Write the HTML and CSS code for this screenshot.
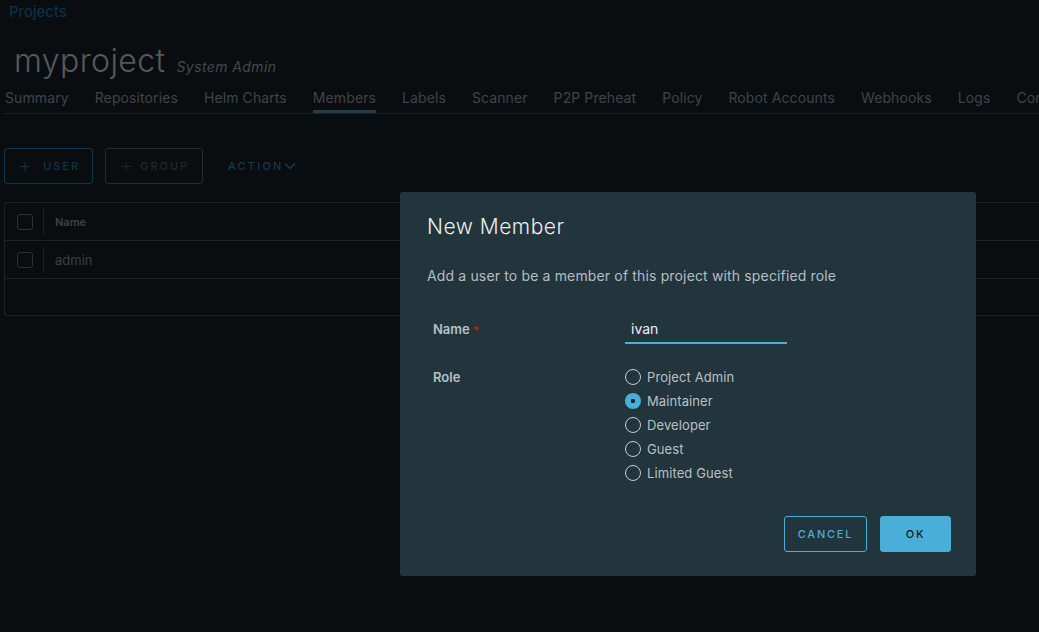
FILE: index.html
```html
<!DOCTYPE html>
<html>
<head>
<meta charset="utf-8">
<link rel="stylesheet" href="styles.css">
</head>
<body>
<div class="page">
  <a class="crumb">Projects</a>
  <div class="title-row">
    <h1 class="title">myproject</h1>
    <span class="role-tag">System Admin</span>
  </div>
  <nav class="tabs">
    <span class="tab">Summary</span>
    <span class="tab">Repositories</span>
    <span class="tab">Helm Charts</span>
    <span class="tab active">Members</span>
    <span class="tab">Labels</span>
    <span class="tab">Scanner</span>
    <span class="tab">P2P Preheat</span>
    <span class="tab">Policy</span>
    <span class="tab">Robot Accounts</span>
    <span class="tab">Webhooks</span>
    <span class="tab">Logs</span>
    <span class="tab">Configuration</span>
  </nav>
  <div class="toolbar">
    <button class="btn btn-user"><span class="plus">+</span>USER</button>
    <button class="btn btn-group"><span class="plus">+</span>GROUP</button>
    <button class="btn-link">ACTION<svg class="caret" width="12" height="8" viewBox="0 0 12 8"><path d="M1 1.5 L6 6.5 L11 1.5" fill="none" stroke="currentColor" stroke-width="1.6"/></svg></button>
  </div>
  <div class="grid">
    <div class="grid-row head">
      <span class="cb"></span><span class="sep"></span><span class="cell bold">Name</span>
    </div>
    <div class="grid-row">
      <span class="cb"></span><span class="sep"></span><span class="cell">admin</span>
    </div>
    <div class="grid-foot"></div>
  </div>
</div>

<div class="modal">
  <h3 class="modal-title">New Member</h3>
  <p class="modal-desc">Add a user to be a member of this project with specified role</p>
  <div class="form">
    <div class="form-row">
      <label class="label">Name <span class="req">*</span></label>
      <div class="input">ivan</div>
    </div>
    <div class="form-row roles">
      <label class="label">Role</label>
      <div class="radios">
        <div class="radio"><span class="dot"></span>Project Admin</div>
        <div class="radio checked"><span class="dot"></span>Maintainer</div>
        <div class="radio"><span class="dot"></span>Developer</div>
        <div class="radio"><span class="dot"></span>Guest</div>
        <div class="radio"><span class="dot"></span>Limited Guest</div>
      </div>
    </div>
  </div>
  <div class="modal-foot">
    <button class="mbtn outline">CANCEL</button>
    <button class="mbtn primary">OK</button>
  </div>
</div>
</body>
</html>
```

FILE: styles.css
```css
html, body {
  margin: 0;
  padding: 0;
  background: #0a0d10;
  font-family: "Inter", "Noto Sans", sans-serif;
  overflow: hidden;
  width: 1039px;
  height: 632px;
}
.page {
  position: relative;
  overflow: hidden;
}
.crumb {
  display: block;
  color: #0b3550;
  font-size: 15px;
  line-height: 18px;
  padding-left: 9px;
  margin-top: 3px;
}
.title-row {
  display: flex;
  align-items: baseline;
  gap: 11px;
  padding-left: 14px;
  margin-top: 20px;
  height: 40px;
}
.title {
  margin: 0;
  font-size: 32px;
  font-weight: 300;
  letter-spacing: 0.4px;
  color: #55595c;
  line-height: 40px;
}
.role-tag {
  font-style: italic;
  font-size: 14px;
  letter-spacing: 0.4px;
  color: #44494c;
}
.tabs {
  display: flex;
  gap: 26px;
  margin-left: 4px;
  padding-left: 1px;
  border-bottom: 1px solid #1b2024;
  height: 30px;
  white-space: nowrap;
  margin-top: 2px;
  overflow: hidden;
}
.tab {
  font-size: 14px;
  letter-spacing: 0.1px;
  color: #3f4448;
  line-height: 28px;
  height: 30px;
  box-sizing: border-box;
  padding-top: 1px;
  border-bottom: 3px solid transparent;
}
.tab.active {
  border-bottom-color: #1f3d4b;
}
.toolbar {
  display: flex;
  align-items: center;
  margin-top: 34px;
  margin-left: 4px;
  height: 36px;
}
.btn {
  height: 36px;
  box-sizing: border-box;
  background: transparent;
  border-radius: 3px;
  font-family: inherit;
  font-size: 11px;
  letter-spacing: 2px;
  font-weight: 500;
  display: flex;
  align-items: center;
  gap: 11px;
  padding: 0 12px 0 13px;
}
.plus {
  font-size: 22px;
  font-weight: 200;
  letter-spacing: 0;
  line-height: 1;
  margin-top: -2px;
}
.btn-user {
  border: 1px solid #0f364a;
  color: #0f364a;
  width: 89px;
}
.btn-group {
  border: 1px solid #24292d;
  color: #22272b;
  margin-left: 12px;
  width: 98px;
  gap: 7px;
}
.btn-link {
  margin-left: 25px;
  background: transparent;
  border: none;
  color: #123a4f;
  font-family: inherit;
  font-size: 11px;
  letter-spacing: 2.2px;
  font-weight: 500;
  display: flex;
  align-items: center;
  gap: 0;
  padding: 0;
}
.grid {
  margin-top: 18px;
  margin-left: 4px;
  border: 1px solid #1c2226;
  border-right: none;
  border-radius: 3px 0 0 3px;
}
.grid-row {
  display: flex;
  align-items: center;
  height: 37px;
  border-bottom: 1px solid #1c2226;
}
.cb {
  width: 14px;
  height: 14px;
  border: 1px solid #2c3236;
  border-radius: 3px;
  margin-left: 12px;
}
.sep {
  width: 1px;
  height: 26px;
  background: #1c2226;
  margin-left: 10px;
}
.cell {
  margin-left: 11px;
  font-size: 13px;
  color: #3a3f43;
}
.cell.bold {
  font-size: 11px;
  font-weight: 600;
  color: #3e4347;
}
.grid-foot {
  height: 36px;
}

.modal {
  position: absolute;
  left: 400px;
  top: 192px;
  width: 576px;
  height: 384px;
  box-sizing: border-box;
  background: #22343c;
  border-radius: 3px;
  padding: 22px 25px 24px 27px;
  display: flex;
  flex-direction: column;
  color: #e4e9ec;
}
.modal-title {
  margin: 0;
  font-size: 21px;
  font-weight: 300;
  letter-spacing: 0.5px;
  color: #eaeef0;
  line-height: 26px;
}
.modal-desc {
  margin: 26px 0 0;
  font-size: 14px;
  letter-spacing: 0.15px;
  line-height: 20px;
  color: #b5bec3;
}
.form {
  margin-top: 28px;
  padding-left: 6px;
}
.form-row {
  display: flex;
}
.label {
  width: 192px;
  font-size: 13px;
  font-weight: 600;
  color: #b9c1c5;
  line-height: 30px;
}
.req {
  color: #c92100;
  font-size: 11px;
}
.input {
  width: 162px;
  height: 30px;
  box-sizing: border-box;
  border-bottom: 2px solid #49afd9;
  font-size: 14px;
  color: #eef1f3;
  padding-left: 6px;
  line-height: 30px;
}
.roles {
  margin-top: 22px;
}
.roles .label {
  line-height: 20px;
}
.radios {
  display: flex;
  flex-direction: column;
  gap: 4px;
}
.radio {
  display: flex;
  align-items: center;
  gap: 6px;
  font-size: 13px;
  letter-spacing: 0.1px;
  color: #b9c1c5;
  height: 20px;
}
.dot {
  width: 16px;
  height: 16px;
  box-sizing: border-box;
  border: 1px solid #c5ced2;
  border-radius: 50%;
}
.radio.checked .dot {
  border: none;
  background: radial-gradient(circle, #1b2a32 0 2px, #49afd9 2.5px);
}
.modal-foot {
  margin-top: auto;
  display: flex;
  justify-content: flex-end;
  gap: 13px;
}
.mbtn {
  height: 36px;
  box-sizing: border-box;
  border-radius: 3px;
  font-family: inherit;
  font-size: 11px;
  font-weight: 500;
  letter-spacing: 1.8px;
}
.mbtn.outline {
  width: 83px;
  background: transparent;
  border: 1px solid #49afd9;
  color: #49afd9;
}
.mbtn.primary {
  width: 71px;
  background: #49afd9;
  border: 1px solid #49afd9;
  color: #0f1b21;
}
```
